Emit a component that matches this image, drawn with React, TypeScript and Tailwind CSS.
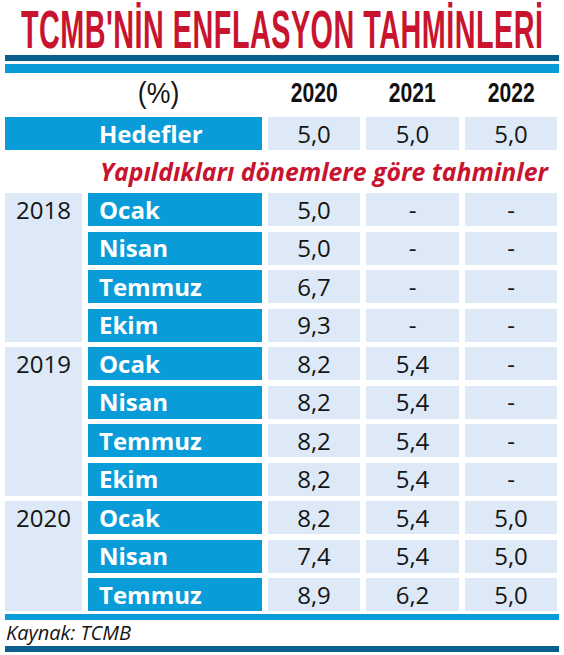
import React from "react";

type Row = { m: string; v: [string, string, string] };
type Group = { year: string; rows: Row[] };

const groups: Group[] = [
  {
    year: "2018",
    rows: [
      { m: "Ocak", v: ["5,0", "-", "-"] },
      { m: "Nisan", v: ["5,0", "-", "-"] },
      { m: "Temmuz", v: ["6,7", "-", "-"] },
      { m: "Ekim", v: ["9,3", "-", "-"] },
    ],
  },
  {
    year: "2019",
    rows: [
      { m: "Ocak", v: ["8,2", "5,4", "-"] },
      { m: "Nisan", v: ["8,2", "5,4", "-"] },
      { m: "Temmuz", v: ["8,2", "5,4", "-"] },
      { m: "Ekim", v: ["8,2", "5,4", "-"] },
    ],
  },
  {
    year: "2020",
    rows: [
      { m: "Ocak", v: ["8,2", "5,4", "5,0"] },
      { m: "Nisan", v: ["7,4", "5,4", "5,0"] },
      { m: "Temmuz", v: ["8,9", "6,2", "5,0"] },
    ],
  },
];

const sans = "font-['Open_Sans',_'Noto_Sans',sans-serif]";
const cond = "font-['Liberation_Sans',_Arial,sans-serif]";

function ValueCell({ t }: { t: string }) {
  return (
    <div
      className={`h-[33px] bg-[#dde9f6] flex items-center justify-center text-[24px] leading-none text-[#151515] ${sans}`}
    >
      {t}
    </div>
  );
}

export default function App() {
  return (
    <div className="w-[564px] h-[655px] bg-white px-[5px] flex flex-col overflow-hidden">
      {/* Title */}
      <div className="h-[55px] pt-[4px] flex items-center justify-center">
        <div
          className={`${cond} font-bold text-[30px] leading-none tracking-[0.5px] text-[#c8142f] whitespace-nowrap scale-x-[0.96] scale-y-[1.77] shrink-0`}
        >
          TCMB'NİN ENFLASYON TAHMİNLERİ
        </div>
      </div>
      <div className="h-[6px] bg-[#0b5f8e]" />
      <div className="h-[9px] mt-[3px] bg-[#0a9cd8]" />

      {/* Header row */}
      <div className="grid grid-cols-[77px_174px_92px_93px_92px] gap-x-[6px] h-[44px] pb-[4px] items-center">
        <div />
        <div className="flex pl-[48px]">
          <div
            className={`${cond} text-[29px] leading-none text-[#151515] scale-x-[0.92] whitespace-nowrap`}
          >
            (%)
          </div>
        </div>
        {["2020", "2021", "2022"].map((y) => (
          <div key={y} className="flex justify-center">
            <div
              className={`${cond} font-bold text-[28px] leading-none text-[#111] scale-x-[0.755]`}
            >
              {y}
            </div>
          </div>
        ))}
      </div>

      {/* Hedefler row */}
      <div className="grid grid-cols-[257px_92px_93px_92px] gap-x-[6px] h-[33px]">
        <div
          className={`bg-[#0a9cd8] flex items-center pl-[94px] text-white font-bold text-[24px] leading-none ${sans}`}
        >
          Hedefler
        </div>
        <ValueCell t="5,0" />
        <ValueCell t="5,0" />
        <ValueCell t="5,0" />
      </div>

      {/* Subtitle */}
      <div
        className={`h-[43px] flex items-center pl-[95px] text-[#c8142f] font-bold italic text-[24.8px] leading-none whitespace-nowrap ${sans}`}
      >
        Yapıldıkları dönemlere göre tahminler
      </div>

      {/* Data grid */}
      <div className="grid grid-cols-[77px_174px_92px_93px_92px] gap-x-[6px] gap-y-[5.5px] auto-rows-[33px]">
        {groups.map((g) => (
          <React.Fragment key={g.year}>
            <div
              className={`col-start-1 bg-[#dde9f6] ${g.rows.length === 4 ? "row-span-4" : "row-span-3"}`}
            >
              <div
                className={`h-[33px] flex items-center justify-center text-[24px] leading-none text-[#151515] ${sans}`}
              >
                {g.year}
              </div>
            </div>
            {g.rows.map((r, i) => (
              <React.Fragment key={g.year + i}>
                <div
                  className={`col-start-2 bg-[#0a9cd8] flex items-center pl-[11px] text-white font-bold text-[24px] leading-none ${sans}`}
                >
                  {r.m}
                </div>
                {r.v.map((v, j) => (
                  <ValueCell key={j} t={v} />
                ))}
              </React.Fragment>
            ))}
          </React.Fragment>
        ))}
      </div>

      <div className="h-[6px] mt-[3px] bg-[#0a9cd8]" />
      <div
        className={`h-[26px] flex items-center pl-[1px] italic text-[20px] leading-none text-[#151515] ${sans}`}
      >
        Kaynak: TCMB
      </div>
      <div className="h-[6px] bg-[#0b5f8e]" />
    </div>
  );
}
